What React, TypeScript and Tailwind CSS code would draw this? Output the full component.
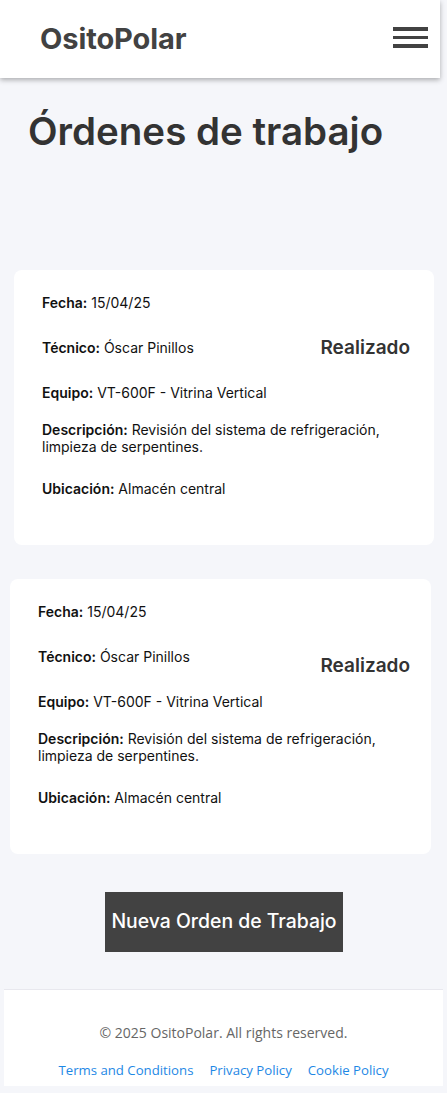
import React from "react";

function Field({ label, value, className = "" }: { label: string; value: string; className?: string }) {
  return (
    <p className={"text-[14px] leading-[17px] text-[#111] " + className}>
      <span className="font-semibold">{label}</span> {value}
    </p>
  );
}

function Card({ outer, statusTop, padRight }: { outer: string; statusTop: string; padRight: string }) {
  return (
    <div className={"bg-white rounded-[8px] h-[275px] flex flex-col pl-[28px] pt-[24px] " + outer + " " + padRight}>
      <Field label="Fecha:" value="15/04/25" />
      <div className="mt-[28px] h-[17px] flex justify-between items-start">
        <Field label="Técnico:" value="Óscar Pinillos" />
        <div className={"text-[19px] leading-[24px] font-semibold text-[#333] " + statusTop}>Realizado</div>
      </div>
      <Field label="Equipo:" value="VT-600F - Vitrina Vertical" className="mt-[28px]" />
      <p className="mt-[20px] text-[14px] leading-[17px] text-[#111] w-[345px]">
        <span className="font-semibold">Descripción:</span> Revisión del sistema de refrigeración,
        <br />
        limpieza de serpentines.
      </p>
      <Field label="Ubicación:" value="Almacén central" className="mt-[25px]" />
    </div>
  );
}

export default function App() {
  return (
    <div className="min-h-[1093px] bg-[#f5f6fa] flex flex-col" style={{ fontFamily: "Inter, 'Noto Sans', sans-serif" }}>
      <header className="w-[440px] h-[78px] bg-white shadow-[0_2px_5px_rgba(0,0,0,0.3)] flex items-center justify-between pl-[40px] pr-[12px]">
        <span className="text-[29px] font-bold text-[#424242] tracking-[-0.1px]">OsitoPolar</span>
        <div className="flex flex-col gap-[5px] w-[35px] -mt-[3px]">
          <span className="block h-[3.5px] bg-[#424242]" />
          <span className="block h-[3.5px] bg-[#424242]" />
          <span className="block h-[3.5px] bg-[#424242]" />
        </div>
      </header>

      <h1 className="mt-[27px] ml-[28px] text-[38.5px] leading-[52px] font-semibold text-[#333]">Órdenes de trabajo</h1>

      <div className="mt-[113px] flex flex-col">
        <Card outer="ml-[14px] w-[420px]" statusTop="-mt-[3px]" padRight="pr-[24px]" />
        <Card outer="mt-[34px] ml-[10px] w-[421px]" statusTop="mt-[6px]" padRight="pr-[21px]" />
      </div>

      <div className="flex justify-center mt-[38px]">
        <button className="ml-[1px] h-[60px] w-[238px] bg-[#424242] text-white text-[19.4px] font-medium">Nueva Orden de Trabajo</button>
      </div>

      <footer
        className="mt-[37px] mx-[4px] h-[97px] bg-white border-t border-[#e8e8ee] flex flex-col items-center pt-[34px]"
        style={{ fontFamily: "'Open Sans', 'Noto Sans', sans-serif" }}
      >
        <p className="text-[14px] leading-[18px] text-[#666]">© 2025 OsitoPolar. All rights reserved.</p>
        <div className="mt-[19px] flex gap-[16px] text-[13.2px] leading-[18px] text-[#1e88e5]">
          <a>Terms and Conditions</a>
          <a>Privacy Policy</a>
          <a>Cookie Policy</a>
        </div>
      </footer>
    </div>
  );
}
